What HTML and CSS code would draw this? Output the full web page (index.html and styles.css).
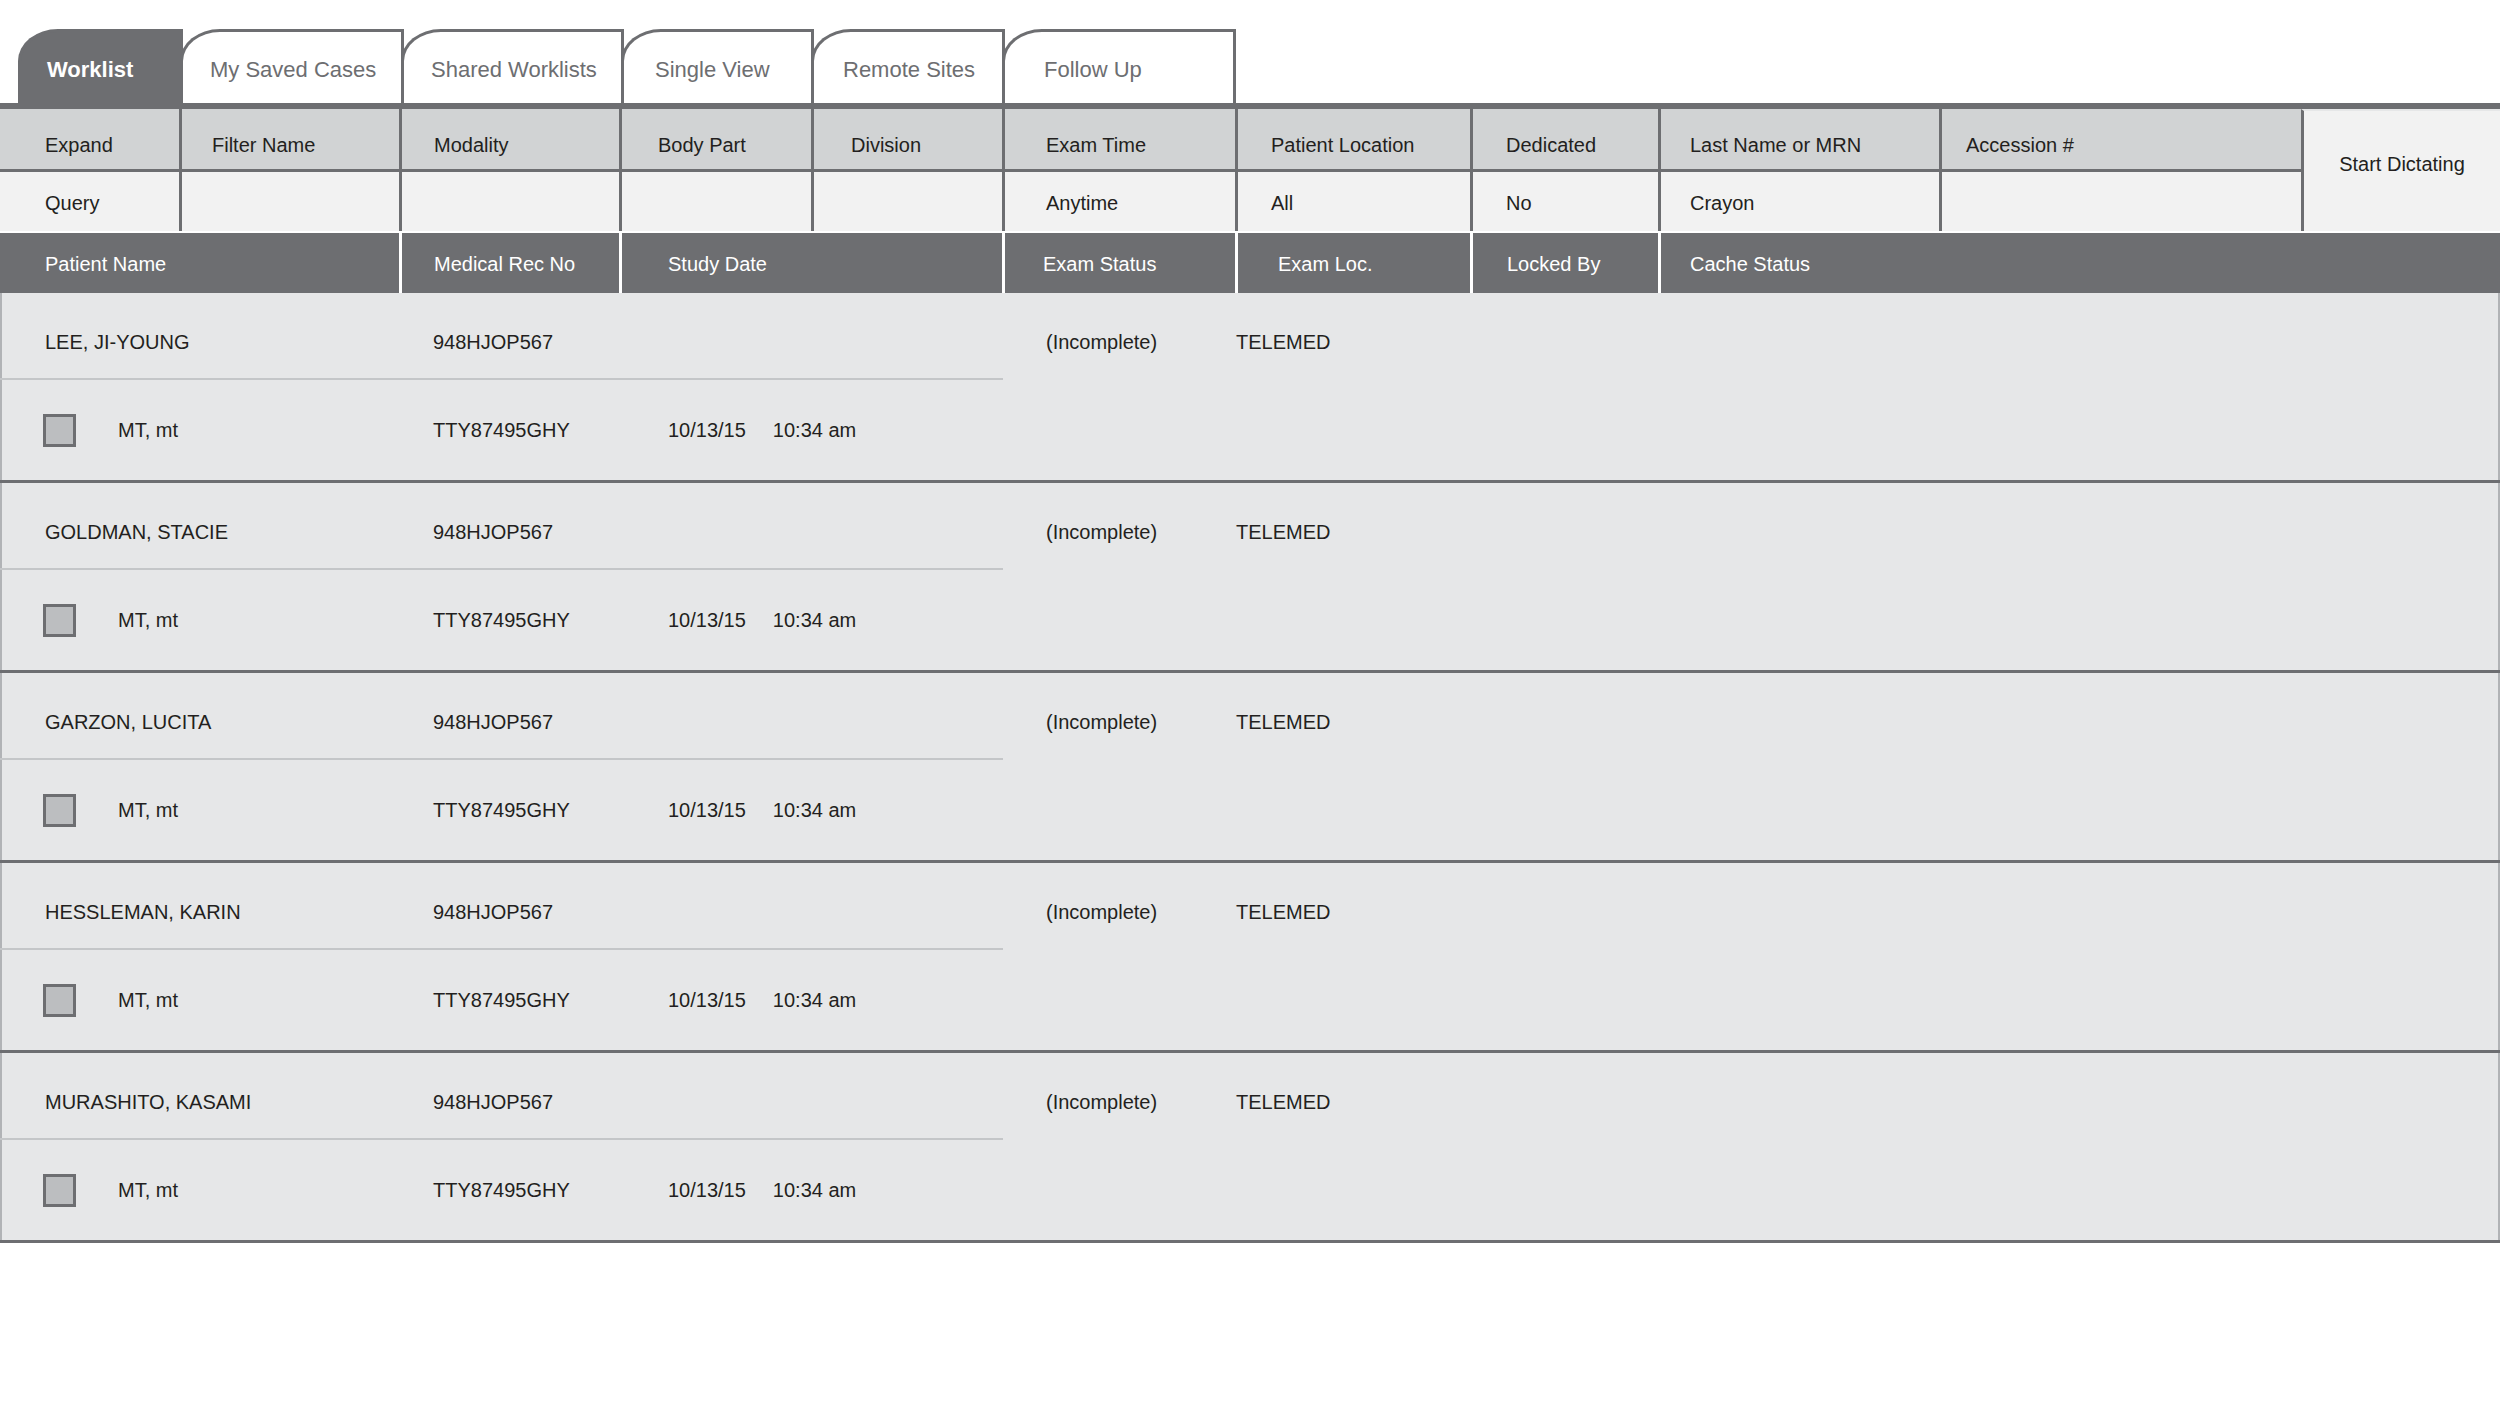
FILE: index.html
```html
<!DOCTYPE html>
<html lang="en">
<head>
    <meta charset="UTF-8">
    <meta name="viewport" content="width=device-width, initial-scale=1.0">
    <title>Worklist</title>
    <link rel="stylesheet" href="styles.css">
</head>
<body>
    <div class="tabs">
        <div class="tab tab-worklist active">Worklist</div>
        <div class="tab tab-saved">My Saved Cases</div>
        <div class="tab tab-shared">Shared Worklists</div>
        <div class="tab tab-single">Single View</div>
        <div class="tab tab-remote">Remote Sites</div>
        <div class="tab tab-follow">Follow Up</div>
    </div>
    <div class="rule"></div>

    <div class="filters">
        <div class="fcol c-expand"><div class="fhead">Expand</div><div class="fval">Query</div></div>
        <div class="fcol c-filter"><div class="fhead">Filter Name</div><div class="fval"></div></div>
        <div class="fcol c-modality"><div class="fhead">Modality</div><div class="fval"></div></div>
        <div class="fcol c-body"><div class="fhead">Body Part</div><div class="fval"></div></div>
        <div class="fcol c-division"><div class="fhead">Division</div><div class="fval"></div></div>
        <div class="fcol c-time"><div class="fhead">Exam Time</div><div class="fval">Anytime</div></div>
        <div class="fcol c-location"><div class="fhead">Patient Location</div><div class="fval">All</div></div>
        <div class="fcol c-dedicated"><div class="fhead">Dedicated</div><div class="fval">No</div></div>
        <div class="fcol c-lastname"><div class="fhead">Last Name or MRN</div><div class="fval">Crayon</div></div>
        <div class="fcol c-accession"><div class="fhead">Accession #</div><div class="fval"></div></div>
        <div class="start">Start Dictating</div>
    </div>

    <div class="columns">
        <div class="h-name">Patient Name</div>
        <div class="h-mrn">Medical Rec No</div>
        <div class="h-date">Study Date</div>
        <div class="h-status">Exam Status</div>
        <div class="h-loc">Exam Loc.</div>
        <div class="h-locked">Locked By</div>
        <div class="h-cache">Cache Status</div>
    </div>

    <div class="rows">
        <div class="row">
            <div class="row-main">
                <div class="line line-top">
                    <div class="name">LEE, JI-YOUNG</div>
                    <div class="mrn">948HJOP567</div>
                    <div></div>
                </div>
                <div class="line line-bottom">
                    <div class="reader"><span class="check"></span>MT, mt</div>
                    <div class="mrn">TTY87495GHY</div>
                    <div class="date"><span>10/13/15</span><span>10:34 am</span></div>
                </div>
            </div>
            <div class="row-side">
                <div class="status">(Incomplete)</div>
                <div class="loc">TELEMED</div>
            </div>
        </div>
        <div class="row">
            <div class="row-main">
                <div class="line line-top">
                    <div class="name">GOLDMAN, STACIE</div>
                    <div class="mrn">948HJOP567</div>
                    <div></div>
                </div>
                <div class="line line-bottom">
                    <div class="reader"><span class="check"></span>MT, mt</div>
                    <div class="mrn">TTY87495GHY</div>
                    <div class="date"><span>10/13/15</span><span>10:34 am</span></div>
                </div>
            </div>
            <div class="row-side">
                <div class="status">(Incomplete)</div>
                <div class="loc">TELEMED</div>
            </div>
        </div>
        <div class="row">
            <div class="row-main">
                <div class="line line-top">
                    <div class="name">GARZON, LUCITA</div>
                    <div class="mrn">948HJOP567</div>
                    <div></div>
                </div>
                <div class="line line-bottom">
                    <div class="reader"><span class="check"></span>MT, mt</div>
                    <div class="mrn">TTY87495GHY</div>
                    <div class="date"><span>10/13/15</span><span>10:34 am</span></div>
                </div>
            </div>
            <div class="row-side">
                <div class="status">(Incomplete)</div>
                <div class="loc">TELEMED</div>
            </div>
        </div>
        <div class="row">
            <div class="row-main">
                <div class="line line-top">
                    <div class="name">HESSLEMAN, KARIN</div>
                    <div class="mrn">948HJOP567</div>
                    <div></div>
                </div>
                <div class="line line-bottom">
                    <div class="reader"><span class="check"></span>MT, mt</div>
                    <div class="mrn">TTY87495GHY</div>
                    <div class="date"><span>10/13/15</span><span>10:34 am</span></div>
                </div>
            </div>
            <div class="row-side">
                <div class="status">(Incomplete)</div>
                <div class="loc">TELEMED</div>
            </div>
        </div>
        <div class="row">
            <div class="row-main">
                <div class="line line-top">
                    <div class="name">MURASHITO, KASAMI</div>
                    <div class="mrn">948HJOP567</div>
                    <div></div>
                </div>
                <div class="line line-bottom">
                    <div class="reader"><span class="check"></span>MT, mt</div>
                    <div class="mrn">TTY87495GHY</div>
                    <div class="date"><span>10/13/15</span><span>10:34 am</span></div>
                </div>
            </div>
            <div class="row-side">
                <div class="status">(Incomplete)</div>
                <div class="loc">TELEMED</div>
            </div>
        </div>
    </div>
</body>
</html>
```

FILE: styles.css
```css
body {
    margin: 0;
    font-family: "Liberation Sans", Arial, sans-serif;
    color: #231f20;
    background-color: #fff;
}

/* tabs */
.tabs {
    display: flex;
    padding: 29px 0 0 18px;
}
.tab {
    box-sizing: border-box;
    height: 74px;
    margin-left: -3px;
    padding-top: 5px;
    display: flex;
    align-items: center;
    border: 3px solid #6d6e71;
    border-bottom: none;
    border-top-left-radius: 40px 32px;
    background-color: #fff;
    color: #6d6e71;
    font-size: 22px;
}
.tab.active {
    background-color: #6d6e71;
    color: #fff;
    font-weight: bold;
}
.tab-worklist { margin-left: 0; width: 165px; padding-left: 26px; }
.tab-saved { width: 224px; padding-left: 27px; }
.tab-shared { width: 223px; padding-left: 27px; }
.tab-single { width: 193px; padding-left: 31px; }
.tab-remote { width: 194px; padding-left: 29px; }
.tab-follow { width: 234px; padding-left: 39px; }

.rule {
    height: 6px;
    background-color: #6d6e71;
}

/* filter block */
.filters {
    display: grid;
    grid-template-columns: 179px 220px 220px 192px 191px 233px 235px 188px 281px 362px 1fr;
    height: 122px;
    font-size: 20px;
}
.fcol {
    display: flex;
    flex-direction: column;
    border-left: 3px solid #6d6e71;
}
.fhead,
.fval {
    display: flex;
    align-items: center;
    padding-left: var(--pad);
}
.fhead {
    box-sizing: border-box;
    height: 63px;
    padding-top: 13px;
    background-color: #d1d3d4;
    border-bottom: 3px solid #6d6e71;
}
.fval {
    flex: 1;
    padding-top: 4px;
    background-color: #f2f2f2;
}
.c-expand { border-left: none; --pad: 45px; }
.c-filter { --pad: 30px; }
.c-modality { --pad: 32px; }
.c-body { --pad: 36px; }
.c-division { --pad: 37px; }
.c-time { --pad: 41px; }
.c-location { --pad: 33px; }
.c-dedicated { --pad: 33px; }
.c-lastname { --pad: 29px; }
.c-accession { --pad: 24px; }

.start {
    display: flex;
    align-items: center;
    justify-content: center;
    padding-bottom: 14px;
    border-left: 3px solid #6d6e71;
    border-top: 2px solid #e6e7e8;
    background-color: #f2f2f2;
}

/* column header */
.columns {
    display: grid;
    grid-template-columns: 399px 220px 383px 233px 235px 188px 1fr;
    height: 60px;
    margin-top: 2px;
    background-color: #6d6e71;
    color: #fff;
    font-size: 20px;
}
.columns div {
    display: flex;
    align-items: center;
    padding-top: 2px;
    padding-left: var(--pad);
    border-left: 3px solid #fff;
}
.columns .h-name { border-left: none; --pad: 45px; }
.h-mrn { --pad: 32px; }
.h-date { --pad: 46px; }
.h-status { --pad: 38px; }
.h-loc { --pad: 40px; }
.h-locked { --pad: 34px; }
.h-cache { --pad: 29px; }

/* worklist rows */
.rows {
    background-color: #e6e7e8;
    box-shadow: inset 2px 0 #b1b3b6, inset -2px 0 #b1b3b6;
}
.row {
    display: grid;
    grid-template-columns: 1003px 1fr;
    border-bottom: 3px solid #6d6e71;
    font-size: 20px;
}
.line {
    display: grid;
    grid-template-columns: 399px 220px 384px;
}
.line-top {
    box-sizing: border-box;
    height: 87px;
    padding-top: 38px;
    line-height: 22px;
    border-bottom: 2px solid #c4c6c8;
}
.line-bottom {
    height: 100px;
    align-items: center;
}
.name {
    padding-left: 45px;
}
.mrn {
    padding-left: 34px;
}
.reader {
    display: flex;
    align-items: center;
    padding-left: 43px;
}
.check {
    box-sizing: border-box;
    width: 33px;
    height: 33px;
    margin-right: 42px;
    border: 3px solid #6d6e71;
    background-color: #bcbec0;
}
.date {
    display: flex;
    gap: 27px;
    padding-left: 49px;
}
.row-side {
    display: grid;
    grid-template-columns: 232px 1fr;
    align-self: start;
    padding-top: 38px;
    line-height: 22px;
}
.status {
    padding-left: 43px;
}
.loc {
    padding-left: 1px;
}
```
